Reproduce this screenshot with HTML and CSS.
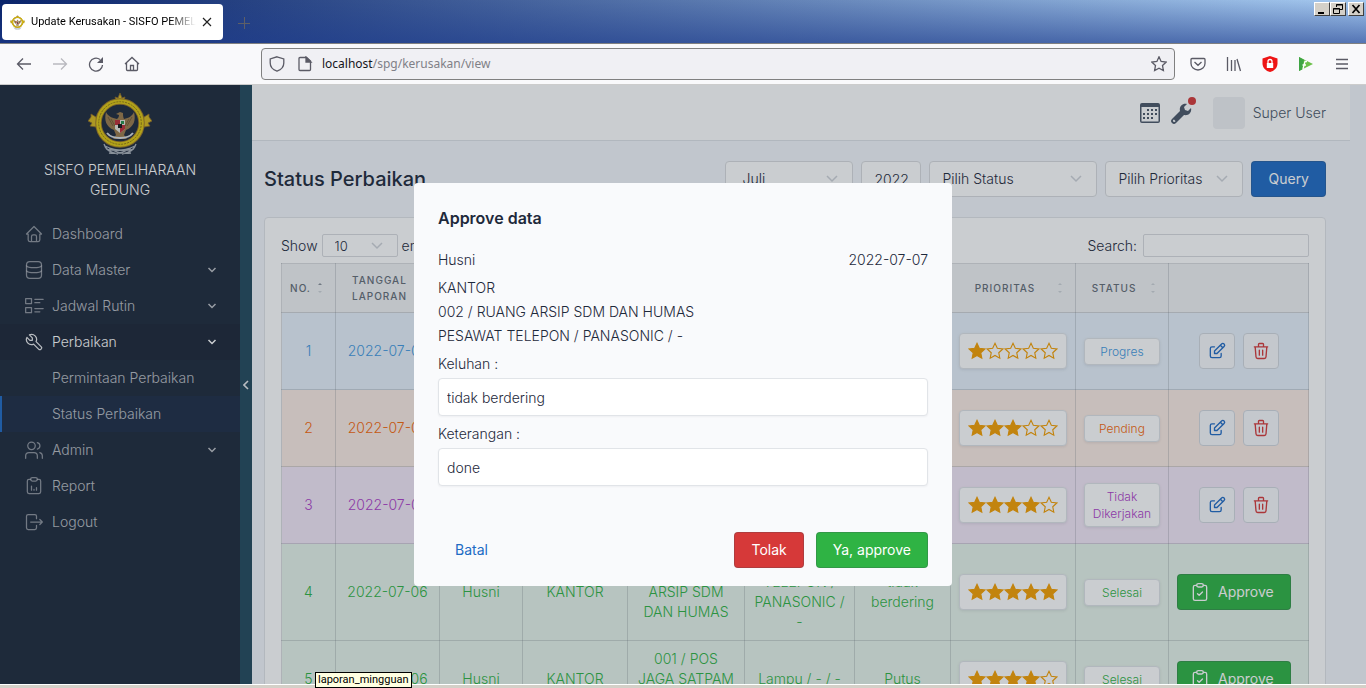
FILE: index.html
```html
<!DOCTYPE html>
<html lang="id">
<head>
<meta charset="utf-8">
<title>Update Kerusakan - SISFO PEMELIHARAAN GEDUNG</title>
<link rel="stylesheet" href="styles.css">
</head>
<body>
<svg class="defs" aria-hidden="true">
  <symbol id="logo" viewBox="0 0 64 64">
    <g fill="none" stroke="#aab0b8" stroke-width="1.3"><path d="M16 52q2 8 14 10M48 52q-2 8-14 10M18 57q14 4 29-3M46 57q-14 4-29-3M21 61q11 2 22-5M43 61q-11 2-22-5"/></g>
    <g fill="#d8b81c" stroke="#8d6a24" stroke-width=".8"><path d="M28 8l-1-3 3 1 2-5 2 5 3-1-1 3 1 3H27zM8 25l-5-3 0 3-3 4 4 2-2 3 6 1 3-5zM56 25l5-3 0 3 3 4-4 2 2 3-6 1-3-5z"/></g>
    <circle cx="32" cy="31" r="21.5" fill="none" stroke="#9b7623" stroke-width="6.5"/>
    <circle cx="32" cy="31" r="21.5" fill="none" stroke="#dfc60f" stroke-width="4.6"/>
    <circle cx="32" cy="31" r="21.3" fill="none" stroke="#927910" stroke-width="1" stroke-dasharray="2 1"/>
    <path d="M18 20c-2 8 0 15 8 18l2 5-3 4h14l-3-4 2-5c8-3 10-10 8-18-2 4-5 6-10 7-1-2-1-4-1-6l-3-1-4 2 3 1c0 2-1 3-2 4-5-1-9-3-11-7z" fill="#9b7b4a"/>
    <path d="M20 25l5 9M23 27l4 7M44 25l-5 9M41 27l-4 7" stroke="#6d5330" stroke-width=".8"/>
    <path d="M27 28h10v9l-5 4-5-4z" fill="#e8e4dc"/><path d="M27 28h5v5h-5zM32 33h5v4l-5 4z" fill="#bd2c35"/><path d="M33 29h3v3h-3z" fill="#25924c"/><path d="M30 32h4v4h-4z" fill="#151515"/>
    <path d="M19 41q4 5 13 5t13-5" fill="none" stroke="#d8dde2" stroke-width="2"/>
  </symbol>
  <symbol id="star" viewBox="0 0 24 24"><path d="M12 1.8l3.1 6.6 7.3.9-5.4 5 1.4 7.2L12 18l-6.4 3.5L7 14.300l-5.400-5 7.300-.9z"/></symbol>
  <symbol id="edit" viewBox="0 0 24 24"><path d="M9 7H6a2 2 0 0 0-2 2v9a2 2 0 0 0 2 2h9a2 2 0 0 0 2-2v-3"/><path d="M9 15h3l8.500-8.500a1.500 1.500 0 0 0-3-3L9 12v3M16 5l3 3"/></symbol>
  <symbol id="trash" viewBox="0 0 24 24"><path d="M4 7h16M10 11v6M14 11v6M5 7l1 12a2 2 0 0 0 2 2h8a2 2 0 0 0 2-2l1-12M9 7V4a1 1 0 0 1 1-1h4a1 1 0 0 1 1 1v3"/></symbol>
  <symbol id="check" viewBox="0 0 24 24"><path d="M8 4H6a2 2 0 0 0-2 2v14a2 2 0 0 0 2 2h12a2 2 0 0 0 2-2V6a2 2 0 0 0-2-2h-2"/><rect x="8" y="2" width="8" height="4" rx="2"/><path d="M9 14l2 2 4-4"/></symbol>
  <symbol id="down" viewBox="0 0 24 24"><path d="M5 8l7 7 7-7"/></symbol>
</svg>

<header class="browser">
  <div class="tabstrip">
    <div class="tab">
      <svg class="favicon"><use href="#logo"/></svg>
      <span class="tab-title">Update Kerusakan - SISFO PEMELIHARAAN</span>
      <button class="plain" aria-label="Close tab"><svg width="10" height="10" viewBox="0 0 10 10" fill="none" stroke="#222" stroke-width="1.200"><path d="M1 1l8 8M9 1L1 9"/></svg></button>
    </div>
    <button class="plain newtab" aria-label="New tab"><svg width="12" height="12" viewBox="0 0 12 12" stroke="#5e5f66"><path d="M0 6.500h12M6.500 0v12"/></svg></button>
    <div class="winbtns">
      <button aria-label="Minimize"><svg viewBox="0 0 12 12"><path d="M2 9h6v2H2z"/></svg></button>
      <button aria-label="Restore"><svg viewBox="0 0 12 12" fill="none" stroke="#000"><path d="M4.500 4V1.500h6v5H8M4 2h7M1.500 5.500h6v5h-6zM1 6h7"/></svg></button>
      <button class="gap" aria-label="Close"><svg viewBox="0 0 12 12" stroke="#000" stroke-width="1.700"><path d="M2.500 2l7 8M9.500 2l-7 8"/></svg></button>
    </div>
  </div>
  <div class="toolbar">
    <nav class="history">
      <button class="plain" aria-label="Back"><svg class="ic" viewBox="0 0 16 16"><path d="M15 8H2M7 2.500L1.500 8 7 13.500"/></svg></button>
      <button class="plain faded" aria-label="Forward"><svg class="ic" viewBox="0 0 16 16"><path d="M1 8h13M9 2.500L14.500 8 9 13.500"/></svg></button>
      <button class="plain" aria-label="Reload"><svg class="ic" viewBox="0 0 16 16"><path d="M14.500 9a6.500 6.500 0 1 1-2.500-5.500"/><path d="M15 1v6H9z" fill="#5b5b66" stroke="none"/></svg></button>
      <button class="plain" aria-label="Home"><svg class="ic" viewBox="0 0 16 16"><path d="M1 8l7-6.500L15 8M2.500 7v6.500a1 1 0 0 0 1 1h9a1 1 0 0 0 1-1V7M6.500 14v-4.500h3V14"/></svg></button>
    </nav>
    <div class="urlbar">
      <svg class="ic" viewBox="0 0 16 16"><path d="M8 .8L14.800 3v4c0 4-3.300 7-6.800 8.200C4.500 14 1.200 11 1.200 7V3z"/></svg>
      <svg class="ic doc" viewBox="0 0 16 16"><path d="M3 1.500h6.500L13.500 5v8.500a1 1 0 0 1-1 1H3a1 1 0 0 1-1-1v-11a1 1 0 0 1 1-1z"/><path d="M9 1v5h5z" fill="#5b5b66"/></svg>
      <span class="url"><b>localhost</b>/spg/kerusakan/view</span>
      <svg class="ic" viewBox="0 0 16 16"><path d="M8 .8l2.100 4.600 5.100.6-3.700 3.400.9 5.200L8 12.200l-4.400 2.400.9-5.200L.8 6l5.100-.6z"/></svg>
    </div>
    <div class="extensions">
      <svg class="ic" viewBox="0 0 16 16"><path d="M2 2.500h12a1 1 0 0 1 1 1v4a7 6.500 0 0 1-14 0v-4a1 1 0 0 1 1-1zM4.500 6L8 9.300 11.500 6"/></svg>
      <svg class="ic" viewBox="0 0 16 16"><path d="M1.500 1v14M5.500 4v11M9 4v11M11 3l3.500 12"/></svg>
      <svg class="ic shield" viewBox="0 0 16 16"><path d="M8 0l7.500 2.500v5C15.500 12 12 15 8 16 4 15 .5 12 .5 7.500v-5z" fill="#ee1515" stroke="none"/><path d="M4.800 7h6.400v5H4.800z" fill="#fff" stroke="none"/><path d="M6 7V5.500a2 2 0 0 1 4 0V7" fill="none" stroke="#fff"/></svg>
      <svg class="ic" viewBox="0 0 16 16"><path d="M1 1l14 7-14 7z" fill="#6cc04a" stroke="none"/><path d="M1 1l5 2.700L4 13.500 1 15z" fill="#3fa544" stroke="none"/><path d="M9 5.500H7L5 13M4.500 9H8" stroke="#fff"/></svg>
      <svg class="ic" viewBox="0 0 16 16"><path d="M2 3.500h12M2 8h12M2 12.500h12"/></svg>
    </div>
  </div>
</header>

<div class="viewport">
  <aside class="sidebar">
    <div class="brand">
      <svg class="brand-logo"><use href="#logo"/></svg>
      <span>SISFO PEMELIHARAAN<br>GEDUNG</span>
    </div>
    <nav class="menu">
      <a href="#"><svg class="ti" viewBox="0 0 24 24"><path d="M5 12H3l9-9 9 9h-2M5 12v7a2 2 0 0 0 2 2h10a2 2 0 0 0 2-2v-7M9 21v-6a2 2 0 0 1 2-2h2a2 2 0 0 1 2 2v6"/></svg><span>Dashboard</span></a>
      <a href="#"><svg class="ti" viewBox="0 0 24 24"><rect x="3" y="2" width="18" height="20" rx="4"/><path d="M3 7c2 3 16 3 18 0M3 13c2 3 16 3 18 0" /></svg><span>Data Master</span><svg class="chev"><use href="#down"/></svg></a>
      <a href="#"><svg class="ti" viewBox="0 0 24 24"><path d="M2 3h7v6H2zM2 14h7v6H2zM13 4h10M13 8h6M13 15h10M13 19h6"/></svg><span>Jadwal Rutin</span><svg class="chev"><use href="#down"/></svg></a>
      <a href="#" class="open"><svg class="ti" viewBox="0 0 24 24"><path d="M7 10h3V7L6.500 3.500a6 6 0 0 1 8 8l6 6a2 2 0 0 1-3 3l-6-6a6 6 0 0 1-8-8L7 10"/></svg><span>Perbaikan</span><svg class="chev"><use href="#down"/></svg></a>
      <a href="#" class="sub">Permintaan Perbaikan</a>
      <a href="#" class="sub active">Status Perbaikan</a>
      <a href="#"><svg class="ti" viewBox="0 0 24 24"><circle cx="9" cy="7" r="4.500"/><path d="M2 22v-3a4 4 0 0 1 4-4h6a4 4 0 0 1 4 4v3M16 3.100a4 4 0 0 1 0 7.800M22 22v-3a4 4 0 0 0-3-3.800"/></svg><span>Admin</span><svg class="chev"><use href="#down"/></svg></a>
      <a href="#"><svg class="ti" viewBox="0 0 24 24"><path d="M8 4H6a2 2 0 0 0-2 2v13a2 2 0 0 0 2 2h12a2 2 0 0 0 2-2V6a2 2 0 0 0-2-2h-2"/><rect x="8" y="2" width="8" height="4" rx="2"/><path d="M9 17v-5M12 17v-1M15 17v-3"/></svg><span>Report</span></a>
      <a href="#"><svg class="ti" viewBox="0 0 24 24"><path d="M15 8V5a2 2 0 0 0-2-2H5a2 2 0 0 0-2 2v14a2 2 0 0 0 2 2h8a2 2 0 0 0 2-2v-3M8 12h14M19 9l3 3-3 3"/></svg><span>Logout</span></a>
    </nav>
  </aside>
  <button class="collapse" aria-label="Collapse menu"><svg width="6" height="10" viewBox="0 0 6 10" fill="none" stroke="#e8eaed" stroke-width="1.600"><path d="M5 1L1 5l4 4"/></svg></button>
  <main class="page">
    <header class="topbar">
      <svg class="cal" viewBox="0 0 20 20"><path d="M2 0h16a2 2 0 0 1 2 2v16a2 2 0 0 1-2 2H2a2 2 0 0 1-2-2V2a2 2 0 0 1 2-2zm-.500 4v14.500h17V4z" fill-rule="evenodd"/><path d="M7 7h10M3 11h14M3 15h10" stroke="#4b5768" stroke-width="2" stroke-dasharray="2 2"/></svg>
      <span class="wrench"><svg viewBox="0 0 22 22"><path d="M1 17l8-8c-1-4 2-8 7-7l-3 3 1 3 3 1 3-3c1 4-2 8-7 7l-8 8a2.800 2.800 0 0 1-4-4zm2 .500a1.300 1.300 0 1 0 1.500 1.500z" fill-rule="evenodd"/></svg><i class="dot"></i></span>
      <span class="avatar"></span>
      <span class="user">Super User</span>
    </header>
    <div class="content">
      <div class="heading">
        <h1>Status Perbaikan</h1>
        <form class="filters">
          <select class="field month" aria-label="Bulan"><option>Juli</option></select>
          <input class="field year" aria-label="Tahun" value="2022">
          <select class="field status" aria-label="Status"><option>Pilih Status</option></select>
          <select class="field prio" aria-label="Prioritas"><option>Pilih Prioritas</option></select>
          <button class="btn blue" type="button">Query</button>
        </form>
      </div>
      <section class="card">
        <div class="table-tools">
          <label>Show <select class="field small"><option>10</option></select> entries</label>
          <label>Search: <input class="field search" type="search"></label>
        </div>
        <table>
          <colgroup><col class="c1"><col class="c2"><col class="c3"><col class="c4"><col class="c5"><col class="c6"><col class="c7"><col class="c8"><col class="c9"><col class="c10"></colgroup>
          <thead><tr><th class="sort asc">No.</th><th class="sort">Tanggal Laporan</th><th>Pelapor</th><th>Gedung</th><th>Ruang</th><th>Barang</th><th>Keluhan</th><th class="sort">Prioritas</th><th class="sort">Status</th><th></th></tr></thead>
          <tbody id="rows"></tbody>
        </table>
      </section>
    </div>
  </main>

  <div class="backdrop">
    <div class="modal" role="dialog" aria-labelledby="modal-title">
      <h2 id="modal-title">Approve data</h2>
      <div class="meta"><span>Husni</span><span>2022-07-07</span></div>
      <p class="detail">KANTOR<br>002 / RUANG ARSIP SDM DAN HUMAS<br>PESAWAT TELEPON / PANASONIC / -</p>
      <div class="group"><label for="keluhan">Keluhan :</label><input id="keluhan" value="tidak berdering"></div>
      <div class="group"><label for="ket">Keterangan :</label><input id="ket" value="done"></div>
      <div class="actions">
        <button class="btn link">Batal</button>
        <button class="btn red">Tolak</button>
        <button class="btn green">Ya, approve</button>
      </div>
    </div>
  </div>
</div>
<footer class="statusbar"></footer>
<div class="tooltip">laporan_mingguan</div>
<script src="app.js"></script>
</body>
</html>
```

FILE: styles.css
```css
* { box-sizing: border-box; }
body { margin: 0; height: 100vh; display: flex; flex-direction: column; overflow: hidden; font: 300 14px/20px Inter, "Liberation Sans", sans-serif; color: #1e293b; }
button, input, select { font: inherit; color: inherit; margin: 0; }
a { color: inherit; text-decoration: none; }
.defs { position: absolute; width: 0; height: 0; }
.plain { border: 0; background: none; padding: 0; display: flex; align-items: center; justify-content: center; }

/* Browser chrome */
.browser { flex: none; font-family: "Noto Sans", sans-serif; font-weight: 400; }
.tabstrip { height: 44px; display: flex; align-items: flex-start; padding: 0 2px; border-bottom: 1px solid #808080;
  background: linear-gradient(to bottom, rgba(30,70,160,0), rgba(30,60,140,.6)), linear-gradient(to right, #0a246a, #a6caf0); }
.tab { width: 221px; height: 36px; margin-top: 4px; padding: 0 11px 0 8px; background: #fff; border-radius: 4px; display: flex; align-items: center; gap: 6px; color: #000; font-family: Roboto, sans-serif; font-size: 11px; }
.favicon { width: 15px; height: 15px; flex: none; }
.tab-title { flex: 1; overflow: hidden; white-space: nowrap; -webkit-mask-image: linear-gradient(to right, #000 84%, transparent); mask-image: linear-gradient(to right, #000 84%, transparent); }
.newtab { margin: 17px 0 0 15px; }
.winbtns { margin: 2px 0 0 auto; display: flex; }
.winbtns button { width: 16px; height: 14px; padding: 0 1px; background: #d4d0c8; border: 1px solid; border-color: #fff #404040 #404040 #fff; display: flex; align-items: center; justify-content: center; }
.winbtns svg { width: 12px; height: 12px; flex: none; }
.winbtns .gap { margin-left: 2px; }
.toolbar { height: 41px; padding: 0 16px; display: flex; align-items: center; background: #f9f9fb; border-bottom: 1px solid #ccc; }
.ic { width: 16px; height: 16px; flex: none; fill: none; stroke: #5b5b66; stroke-width: 1.3; }
.history { display: flex; gap: 20px; width: 245px; }
.faded { opacity: .4; }
.urlbar { flex: 1; height: 32px; padding: 0 7px; display: flex; align-items: center; gap: 12px; border: 1px solid #808080; border-radius: 4px; background: #f0f0f4; font-size: 12px; color: #808087; }
.url { flex: 1; margin-left: -3px; }
.url b { font-weight: 400; color: #15141a; }
.extensions { display: flex; gap: 20px; margin-left: 15px; }

/* Application */
.viewport { position: relative; flex: 1; min-height: 0; display: flex; overflow: hidden; background: #f4f6fc; }
.sidebar { width: 240px; flex: none; background: #1e293b; color: rgba(255,255,255,.7); }
.brand { display: flex; flex-direction: column; align-items: center; gap: 4px; padding-top: 7px; text-align: center; color: #fff; }
.brand-logo { width: 64px; height: 64px; }
.menu { margin-top: 16px; }
.menu a { height: 36px; display: flex; align-items: center; gap: 8px; padding: 0 22px 0 24px; }
.menu .open { background: #1c2536; color: #fff; }
.menu .sub { padding-left: 52px; }
.menu .active { background: #1d2c45; border-left: 2px solid #206bc4; padding-left: 50px; }
.ti { width: 20px; height: 20px; fill: none; stroke: currentColor; stroke-width: 1.5; opacity: .7; flex: none; stroke-linecap: round; stroke-linejoin: round; }
.menu .open .ti { opacity: .9; }
.chev { width: 12px; height: 12px; margin-left: auto; fill: none; stroke: currentColor; stroke-width: 3; }
.collapse { width: 12px; flex: none; padding: 0; border: 0; background: #23495c; display: flex; align-items: center; justify-content: center; }
.page { flex: 1; min-width: 0; padding-right: 16px; }
.topbar { height: 56px; padding: 0 24px; display: flex; align-items: center; justify-content: flex-end; background: #fff; border-bottom: 1px solid #dfe2e8; color: #4b5768; fill: #4b5768; }
.cal { width: 20px; height: 20px; }
.wrench { position: relative; width: 22px; height: 22px; margin-left: 11px; }
.wrench svg { width: 22px; height: 22px; }
.dot { position: absolute; top: -5px; right: -3px; width: 8px; height: 8px; border-radius: 50%; background: #d63939; }
.avatar { width: 32px; height: 32px; margin: 0 8px 0 20px; border-radius: 4px; background: #f0f1f3; }
.content { padding: 20px 24px 0 12px; }
.heading { display: flex; justify-content: space-between; align-items: center; }
h1 { margin: 0; font-size: 20px; line-height: 28px; font-weight: 500; }
.filters { display: flex; gap: 8px; }
.field { height: 36px; border: 1px solid #d9dbde; border-radius: 4px; background-color: #fff; padding: 0 12px; outline: 0; }
select.field { appearance: none; background: #fff url("data:image/svg+xml,%3Csvg xmlns='http://www.w3.org/2000/svg' viewBox='0 0 16 16'%3E%3Cpath fill='none' stroke='%23cfd3d8' stroke-width='1.5' d='M3 5l5 5 5-5'/%3E%3C/svg%3E") no-repeat right 12px center / 16px; }
.field.month { width: 128px; padding: 0 16px; }
.field.year { width: 60px; }
.field.status { width: 168px; }
.field.prio { width: 138px; }
.btn { height: 36px; padding: 0 16px; border: 1px solid rgba(60,70,80,.25); border-radius: 4px; color: #fff; font-weight: 400; }
.blue { background: #206bc4; }
.red { background: #d63939; }
.green { background: #2fb344; }
.link { background: none; border-color: transparent; color: #206bc4; }
.card { margin-top: 20px; padding: 16px; background: #fff; border: 1px solid #e1e4e8; border-radius: 4px; }
.table-tools { display: flex; justify-content: space-between; margin-bottom: 6px; }
.table-tools label { display: flex; align-items: center; gap: 4px; }
.field.small { width: 76px; height: 23px; border-radius: 2px; font-size: 13px; }
.field.search { width: 166px; height: 23px; border-radius: 2px; margin-left: 2px; }
table { width: 100%; table-layout: fixed; border-collapse: collapse; text-align: center; }
.c1 { width: 54px; } .c2 { width: 104px; } .c3 { width: 83px; } .c4 { width: 105px; } .c5 { width: 117px; }
.c6 { width: 110px; } .c7 { width: 96px; } .c8 { width: 125px; } .c9 { width: 93px; } .c10 { width: 140px; }
th, td { border: 1px solid rgba(101,109,119,.24); padding: 8px; }
td { height: 77px; }
th { height: 49px; background-color: #f1f2f4; color: #656d77; font-size: 10px; line-height: 16px; font-weight: 500; letter-spacing: 1px; text-transform: uppercase; }
.sort { padding-right: 24px; background-image: url("data:image/svg+xml,%3Csvg xmlns='http://www.w3.org/2000/svg' viewBox='0 0 8 12'%3E%3Cpath fill='%23cdd1d6' d='M4 1l2 2H2zM4 11L2 9h4z'/%3E%3C/svg%3E"); background-repeat: no-repeat; background-position: right 11px center; background-size: 8px 12px; }
.asc { background-image: url("data:image/svg+xml,%3Csvg xmlns='http://www.w3.org/2000/svg' viewBox='0 0 8 12'%3E%3Cpath fill='%238a9099' d='M4 1l2 2H2z'/%3E%3Cpath fill='%23cdd1d6' d='M4 11L2 9h4z'/%3E%3C/svg%3E"); }
.progres { background: #e8f1fb; color: #4299e1; }
.pending { background: #fcece4; color: #f76707; }
.tidak { background: #f4e8f7; color: #ae3ec9; }
.selesai { background: #e7f3ea; color: #2fb344; }
.pill { border: 1px solid #dfe3e7; border-radius: 4px; background: #fff; box-shadow: 0 1px 3px rgba(30,41,59,.1); }
.stars { height: 36px; display: flex; align-items: center; justify-content: center; }
.stars svg { width: 18px; height: 18px; fill: none; stroke: #f59f00; stroke-width: 1.5; }
.stars .on { fill: #f59f00; }
.badge { padding: 4px; font-size: 12px; line-height: 17px; }
.tools { display: flex; justify-content: center; gap: 8px; }
.icon-btn { width: 36px; height: 36px; padding: 0; border: 1px solid #d3d8df; border-radius: 4px; background: #f8f9fc; color: #206bc4; display: flex; align-items: center; justify-content: center; }
.icon-btn + .icon-btn { color: #d63939; }
.icon-btn svg, .approve svg { width: 20px; height: 20px; fill: none; stroke: currentColor; stroke-width: 1.6; stroke-linecap: round; stroke-linejoin: round; }
.tools.left { justify-content: flex-start; }
.approve { display: flex; align-items: center; gap: 8px; padding: 0 16px 0 12px; }

/* Dialog */
.backdrop { position: absolute; inset: 0; display: flex; align-items: center; justify-content: center; background: rgba(35,46,60,.24); }
.modal { width: 538px; max-width: 100%; padding: 23px 24px 18px; background: #f9fafc; border-radius: 4px; }
h2 { margin: 0; font-size: 16px; line-height: 24px; font-weight: 600; }
.meta { display: flex; justify-content: space-between; margin-top: 20px; }
.detail { margin: 6px 0; line-height: 24px; }
.group { display: flex; flex-direction: column; gap: 4px; margin-bottom: 8px; }
.group input { height: 38px; padding: 0 8px; border: 1px solid #e1e4e8; border-radius: 4px; background: #fff; box-shadow: 0 1px 2px rgba(30,41,59,.05); outline: 0; }
.actions { display: flex; gap: 12px; margin-top: 46px; }
.actions .link { margin-right: auto; }
.statusbar { height: 4px; flex: none; background: #d4d0c8; border-top: 1px solid #fff; }
.tooltip { position: absolute; left: 315px; bottom: 0; padding: 0 2px; border: 1px solid #000; background: #ffffe1; color: #000; font: 11px/14px Roboto, sans-serif; }
```

FILE: app.js
```js
const rows = [
  ["2022-07-07", "Husni", "KANTOR", "002 / RUANG ARSIP SDM DAN HUMAS", "Lampu / - / -", "Putus", 1, "Progres", "progres"],
  ["2022-07-07", "Husni", "KANTOR", "002 / RUANG ARSIP SDM DAN HUMAS", "Lampu / - / -", "Putus", 3, "Pending", "pending"],
  ["2022-07-07", "Husni", "KANTOR", "002 / RUANG ARSIP SDM DAN HUMAS", "Lampu / - / -", "Putus", 4, "Tidak Dikerjakan", "tidak"],
  ["2022-07-06", "Husni", "KANTOR", "002 / RUANG ARSIP SDM DAN HUMAS", "PESAWAT TELEPON / PANASONIC / -", "tidak berdering", 5, "Selesai", "selesai"],
  ["2022-07-06", "Husni", "KANTOR", "001 / POS JAGA SATPAM DEPAN", "Lampu / - / -", "Putus", 4, "Selesai", "selesai"]
];
const icon = (id, cls = "") => `<svg class="${cls}" aria-hidden="true"><use href="#${id}"/></svg>`;
const edit = `<div class="tools"><button class="icon-btn" aria-label="Edit">${icon("edit")}</button><button class="icon-btn" aria-label="Hapus">${icon("trash")}</button></div>`;
const approve = `<div class="tools left"><button class="btn green approve">${icon("check")}<span>Approve</span></button></div>`;
document.getElementById("rows").innerHTML = rows.map((r, i) => {
  const texts = r.slice(0, 6).map(t => `<td>${t}</td>`).join("");
  const stars = [1, 2, 3, 4, 5].map(n => icon("star", n <= r[6] ? "on" : "")).join("");
  return `<tr class="${r[8]}"><td>${i + 1}</td>${texts}<td><div class="pill stars">${stars}</div></td><td><div class="pill badge">${r[7]}</div></td><td>${r[8] === "selesai" ? approve : edit}</td></tr>`;
}).join("");
```
